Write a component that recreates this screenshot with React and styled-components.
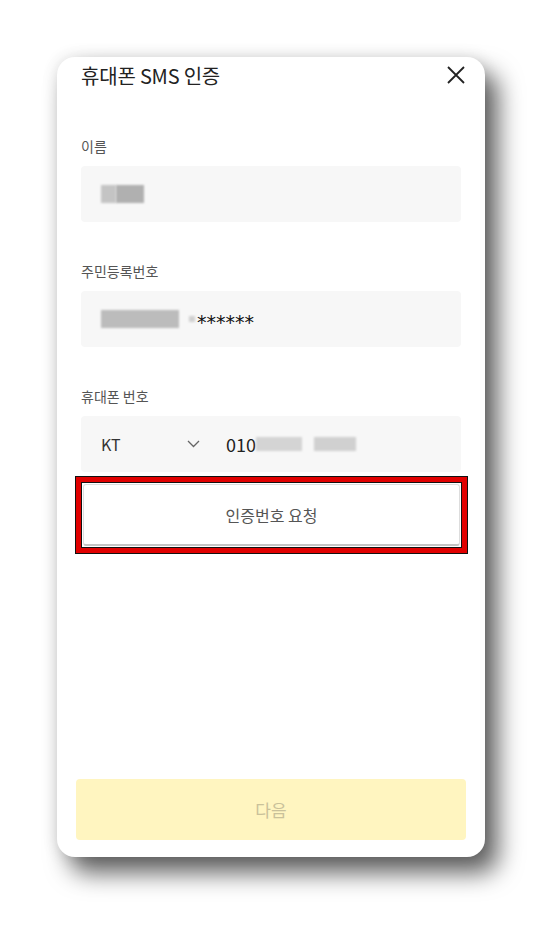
import React from "react";
import styled, { createGlobalStyle } from "styled-components";

const GlobalStyle = createGlobalStyle`
  html, body {
    margin: 0;
    padding: 0;
    background: #ffffff;
  }
  body {
    font-family: "Noto Sans CJK KR", "Noto Sans", sans-serif;
  }
`;

const Page = styled.div`
  width: 556px;
  height: 928px;
  padding: 57px 0 0 57px;
  box-sizing: border-box;
  overflow: hidden;
`;

const Card = styled.div`
  width: 428px;
  height: 800px;
  background: #fff;
  border-radius: 18px;
  box-shadow: 13px 16px 24px rgba(0, 0, 0, 0.62), 0 0 16px rgba(0, 0, 0, 0.12);
  display: flex;
  flex-direction: column;
  box-sizing: border-box;
  padding: 0 0 17px;
`;

const Header = styled.div`
  height: 36px;
  padding: 0 18px 0 24px;
  display: flex;
  align-items: center;
  justify-content: space-between;
`;

const Title = styled.h1`
  margin: 0;
  font-size: 20px;
  font-weight: 400;
  color: #222;
  letter-spacing: -0.2px;
`;

const CloseButton = styled.button`
  border: 0;
  background: none;
  padding: 0;
  width: 22px;
  height: 22px;
  display: flex;
  align-items: center;
  justify-content: center;
`;

const Body = styled.div`
  padding: 43px 24px 0;
  display: flex;
  flex-direction: column;
`;

const Field = styled.div`
  display: flex;
  flex-direction: column;
  margin-bottom: ${(p) => (p.$last ? "0" : "39px")};
`;

const Label = styled.div`
  font-size: 14px;
  line-height: 20px;
  color: #555;
  margin-bottom: 10px;
`;

const InputBox = styled.div`
  height: 56px;
  background: #f7f7f7;
  border-radius: 4px;
  display: flex;
  align-items: center;
  padding: 0 20px;
  box-sizing: border-box;
`;

const Redact = styled.span`
  display: inline-block;
  width: ${(p) => p.$w}px;
  height: ${(p) => p.$h || 18}px;
  background: ${(p) => p.$c || "#bdbdbd"};
  filter: blur(1.2px);
  margin-right: ${(p) => p.$mr || 0}px;
  vertical-align: middle;
`;

const Masked = styled.span`
  font-family: "DejaVu Sans", sans-serif;
  font-size: 19px;
  color: #111;
  margin-left: 2px;
  line-height: 1;
  padding-top: 6px;
`;

const Carrier = styled.div`
  width: 99px;
  display: flex;
  align-items: center;
  justify-content: space-between;
  font-size: 16px;
  color: #333;
  margin-right: 26px;
`;

const PhoneNumber = styled.span`
  font-size: 18px;
  color: #222;
`;

const RequestWrap = styled.div`
  position: relative;
  margin: 12px 1px 0 2px;
`;

const RequestButton = styled.button`
  display: block;
  width: 100%;
  height: 62px;
  background: #fff;
  border: 1px solid #ddd;
  border-bottom: 2px solid #c4c4c4;
  border-radius: 3px;
  font-family: inherit;
  font-size: 16px;
  color: #555;
`;

const Highlight = styled.div`
  position: absolute;
  inset: -7px;
  border: 5px solid #e10000;
  outline: 1px solid #111;
  box-shadow: inset 0 0 0 1px #111;
  pointer-events: none;
`;

const Footer = styled.div`
  margin-top: auto;
  padding: 0 19px;
`;

const NextButton = styled.button`
  width: 100%;
  height: 61px;
  border: 0;
  border-radius: 4px;
  background: #fff5c0;
  font-family: inherit;
  font-size: 17px;
  color: #c9c19a;
`;

function CloseIcon() {
  return (
    <svg width="20" height="20" viewBox="0 0 20 20">
      <path d="M2 2 L18 18 M18 2 L2 18" stroke="#222" strokeWidth="1.8" fill="none" />
    </svg>
  );
}

function Chevron() {
  return (
    <svg width="13" height="8" viewBox="0 0 13 8">
      <path d="M1 1 L6.5 6.5 L12 1" stroke="#666" strokeWidth="1.3" fill="none" />
    </svg>
  );
}

export default function App() {
  return (
    <>
      <GlobalStyle />
      <Page>
        <Card>
          <Header>
            <Title>휴대폰 SMS 인증</Title>
            <CloseButton aria-label="닫기">
              <CloseIcon />
            </CloseButton>
          </Header>
          <Body>
            <Field>
              <Label>이름</Label>
              <InputBox>
                <Redact $w={15} $c="#c4c4c4" />
                <Redact $w={28} $c="#b0b0b0" />
              </InputBox>
            </Field>
            <Field>
              <Label>주민등록번호</Label>
              <InputBox>
                <Redact $w={78} $c="#bcbcbc" $mr={10} />
                <Redact $w={6} $h={6} $c="#d0d0d0" />
                <Masked>******</Masked>
              </InputBox>
            </Field>
            <Field $last>
              <Label>휴대폰 번호</Label>
              <InputBox>
                <Carrier>
                  KT
                  <Chevron />
                </Carrier>
                <PhoneNumber>010</PhoneNumber>
                <Redact $w={46} $h={14} $c="#d4d4d4" $mr={12} />
                <Redact $w={42} $h={14} $c="#d0d0d0" />
              </InputBox>
            </Field>
            <RequestWrap>
              <RequestButton>인증번호 요청</RequestButton>
              <Highlight />
            </RequestWrap>
          </Body>
          <Footer>
            <NextButton>다음</NextButton>
          </Footer>
        </Card>
      </Page>
    </>
  );
}
